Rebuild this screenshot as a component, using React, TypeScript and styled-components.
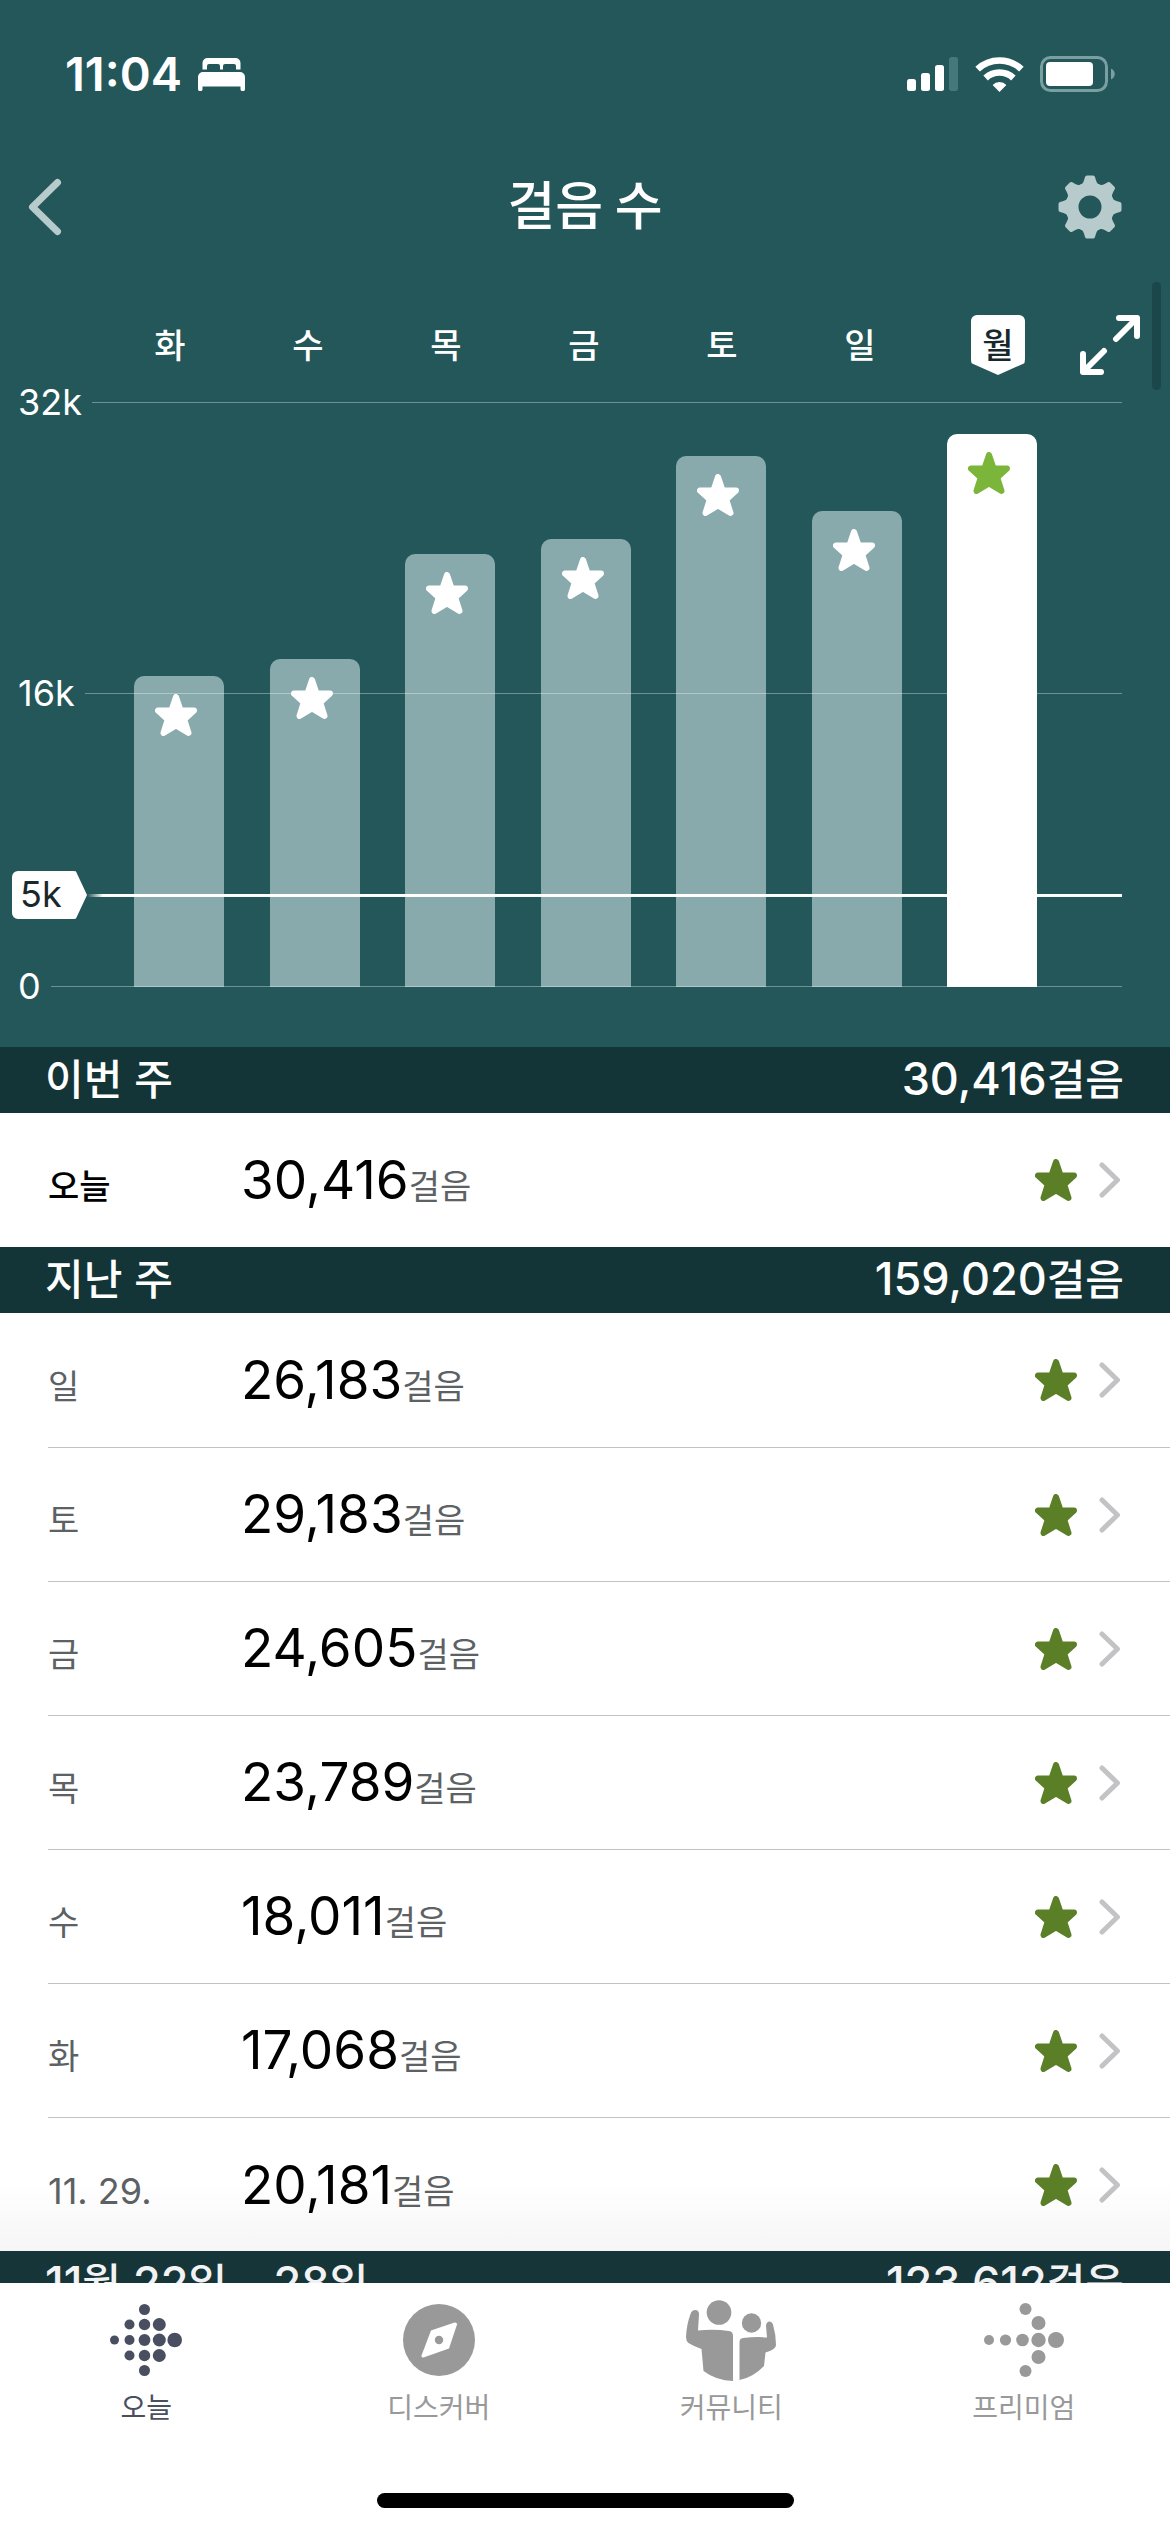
import React from "react";
import styled, { createGlobalStyle, css } from "styled-components";

const latin = `Inter, "Noto Sans CJK KR", sans-serif`;
const korean = `"Noto Sans CJK KR", sans-serif`;

const color = {
  teal: "#23575a",
  band: "#133537",
  mist: "#b7cbcc",
  bar: "#89aaad",
  grid: "rgba(255, 255, 255, 0.35)",
  ink: "#17292c",
  goal: "#7bb53a",
  goalDark: "#5b7f27",
  muted: "#5c6163",
  line: "#c3c3c6",
  navOn: "#494f60",
  navOff: "#999999",
};

const GlobalStyle = createGlobalStyle`
  *, *::before, *::after { box-sizing: border-box; }
  body { margin: 0; background: #fff; font-family: ${latin}; }
  h1, h2, p, ul { margin: 0; padding: 0; }
  ul { list-style: none; }
  button { border: 0; padding: 0; background: none; color: inherit; font: inherit; cursor: pointer; }
  a { color: inherit; text-decoration: none; }
  svg { display: block; flex: none; }
`;

const Screen = styled.div`
  position: relative;
  display: flex;
  flex-direction: column;
  height: 100vh;
  overflow: hidden;
  background: #fff;
`;

const Hero = styled.header`
  background: ${color.teal};
  color: #fff;
`;

const StatusBar = styled.div`
  display: flex;
  justify-content: space-between;
  align-items: center;
  padding: 48px 54px 0 65px;
`;

const StatusGroup = styled.div`
  display: flex;
  align-items: center;
  gap: 16px;
`;

const Clock = styled.span`
  font-size: 47px;
  font-weight: 600;
  line-height: 52px;
`;

const TitleBar = styled.div`
  display: grid;
  grid-template-columns: 1fr auto 1fr;
  align-items: center;
  height: 80px;
  margin-top: 67px;
  padding: 0 48px 0 28px;
`;

const Title = styled.h1`
  font-family: ${korean};
  font-size: 52px;
  font-weight: 500;
  line-height: 72px;
  padding: 0 0 8px 20px;
`;

const IconButton = styled.button<{ $end?: boolean }>`
  justify-self: ${(p) => (p.$end ? "end" : "start")};
  display: flex;
`;

const DayBar = styled.div`
  display: flex;
  align-items: center;
  justify-content: space-between;
  height: 60px;
  margin-top: 68px;
  padding: 0 30px 0 101px;
`;

const DayList = styled.ul`
  flex: 1;
  max-width: 966px;
  display: grid;
  grid-template-columns: repeat(7, 1fr);
`;

const Day = styled.li`
  display: flex;
  justify-content: center;
  font-family: ${korean};
  font-size: 34px;
  font-weight: 500;
  line-height: 58px;
`;

const DayFlag = styled.span`
  width: 54px;
  height: 60px;
  text-align: center;
  line-height: 58px;
  color: ${color.ink};
  background: #fff;
  border-radius: 6px 6px 16px 16px;
  clip-path: polygon(0 0, 100% 0, 100% 80%, 50% 100%, 0 80%);
`;

const Chart = styled.section`
  position: relative;
  height: 672px;
  padding: 27px 48px 60px 134px;
`;

const Bars = styled.ul`
  height: 585px;
  display: grid;
  grid-template-columns: repeat(7, 90px);
  justify-content: space-between;
  align-items: end;
  max-width: 903px;
`;

const Bar = styled.li<{ $active?: boolean }>`
  display: flex;
  justify-content: center;
  padding: 18px 6px 0 0;
  border-radius: 10px 10px 0 0;
  color: ${(p) => (p.$active ? color.goal : "#fff")};
  background: ${(p) => (p.$active ? "#fff" : color.bar)};
`;

/* Scale lines are drawn over the bars, each measured up from the chart floor. */
const Scale = styled.div`
  position: absolute;
  left: 18px;
  right: 48px;
  display: flex;
  align-items: center;
  height: 44px;
  transform: translateY(50%);
  font-size: 36px;
  line-height: 44px;
`;

const ScaleLine = styled.span`
  flex: 1;
  height: 1px;
  margin-left: 10px;
  background: ${color.grid};
`;

const GoalScale = styled(Scale)`
  left: 12px;
  height: 48px;
`;

const GoalFlag = styled.span`
  width: 75px;
  height: 48px;
  padding-left: 8px;
  line-height: 47px;
  color: ${color.ink};
  background: #fff;
  border-radius: 6px 14px 14px 6px;
  clip-path: polygon(0 0, 85% 0, 100% 50%, 85% 100%, 0 100%);
`;

const GoalLine = styled.span`
  flex: 1;
  height: 3px;
  background: linear-gradient(90deg, rgba(255, 255, 255, 0) 0, #fff 16px);
`;

const ScrollThumb = styled.span`
  position: absolute;
  top: 282px;
  right: 9px;
  width: 9px;
  height: 108px;
  border-radius: 5px;
  background: #1b474a;
`;

const History = styled.main`
  position: relative;
  flex: 1;
  min-height: 0;
  overflow: hidden;
  &::after {
    content: "";
    position: absolute;
    inset: auto 0 0;
    height: 100px;
    background: linear-gradient(rgba(60, 60, 80, 0), rgba(60, 60, 80, 0.07));
    pointer-events: none;
  }
`;

const Band = styled.div`
  display: flex;
  justify-content: space-between;
  align-items: baseline;
  height: 66px;
  padding: 0 46px 0 45px;
  background: ${color.band};
  color: #fff;
`;

const bandText = css`
  font-family: ${korean};
  font-size: 42px;
  font-weight: 500;
  line-height: 60px;
`;

const BandTitle = styled.h2`
  ${bandText}
  white-space: pre;
`;

const BandTotal = styled.p`
  ${bandText}
`;

const BandNumber = styled.span`
  font-family: ${latin};
  font-size: 45px;
`;

const RowItem = styled.li`
  margin-left: 48px;
  & + & {
    border-top: 1px solid ${color.line};
  }
  & + & > a {
    height: 133px;
  }
`;

const RowLink = styled.a`
  display: flex;
  align-items: center;
  height: 134px;
  padding-right: 49px;
`;

const RowText = styled.span`
  flex: 1;
  display: flex;
  align-items: baseline;
  padding-top: 6px;
  line-height: 66px;
`;

const RowLabel = styled.span<{ $today?: boolean; $date?: boolean }>`
  width: 193px;
  font-size: ${(p) => (p.$date ? 36 : 34)}px;
  font-weight: ${(p) => (p.$today ? 500 : 400)};
  color: ${(p) => (p.$today ? "#000" : color.muted)};
`;

const Steps = styled.span`
  font-size: 53px;
  color: #000;
`;

const Unit = styled.span`
  font-family: ${korean};
  font-size: 34px;
  color: ${color.muted};
`;

const RowIcons = styled.span`
  display: flex;
  align-items: center;
  gap: 22px;
  color: ${color.goalDark};
`;

const TabBar = styled.nav`
  display: flex;
  flex-direction: column;
  align-items: center;
  justify-content: space-between;
  height: 249px;
  padding-bottom: 24px;
  background: #fff;
`;

const Tabs = styled.ul`
  width: 100%;
  display: grid;
  grid-template-columns: repeat(4, 1fr);
`;

const Tab = styled.a<{ $on?: boolean }>`
  display: flex;
  flex-direction: column;
  align-items: center;
  color: ${(p) => (p.$on ? color.navOn : color.navOff)};
`;

const TabIcon = styled.span`
  display: flex;
  align-items: center;
  height: 84px;
  margin-top: 15px;
`;

const TabLabel = styled.span`
  font-family: ${korean};
  font-size: 28px;
  line-height: 48px;
`;

const HomeIndicator = styled.span`
  width: 417px;
  height: 15px;
  border-radius: 8px;
  background: #000;
`;

const Star = () => (
  <svg width="42" height="42" viewBox="0 0 42 42" fill="currentColor" stroke="currentColor" strokeWidth="6" strokeLinejoin="round">
    <path d="M21 3 L25.500 16.300 L39 16.500 L29.200 25.500 L33.500 39 L21 31.500 L8.500 39 L12.800 25.500 L3 16.500 L16.500 16.300 Z" />
  </svg>
);

const Bed = () => (
  <svg width="47" height="33" viewBox="0 0 47 33" fill="currentColor">
    <path d="M4.500 11.500V5a5 5 0 0 1 5-5h28a5 5 0 0 1 5 5v6.500h-4.500V8a2 2 0 0 0-2-2h-9a2 2 0 0 0-2 2v3.500h-3V8a2 2 0 0 0-2-2h-9a2 2 0 0 0-2 2v3.500z" />
    <path d="M0 19a5 5 0 0 1 5-5h37a5 5 0 0 1 5 5v12a2 2 0 0 1-4.500 0v-2.500h-38V31a2 2 0 0 1-4.500 0z" />
  </svg>
);

const Signal = () => (
  <svg width="52" height="36" viewBox="0 0 52 36" fill="currentColor">
    <rect x="0" y="23" width="9" height="12" rx="2.500" />
    <rect x="14" y="17" width="9" height="18" rx="2.500" />
    <rect x="28" y="9" width="9" height="26" rx="2.500" />
    <rect x="42" y="1" width="9" height="34" rx="2.500" fill="#46777a" />
  </svg>
);

const Wifi = () => (
  <svg width="49" height="36" viewBox="0 0 49 36">
    <g fill="none" stroke="currentColor" strokeWidth="6.600">
      <path d="M2.600 13.200a32 32 0 0 1 43.800 0" />
      <path d="M10.600 22a20.500 20.500 0 0 1 27.800 0" />
    </g>
    <path fill="currentColor" d="M24.500 36 17.600 29a9.600 9.600 0 0 1 13.800 0z" />
  </svg>
);

const Battery = () => (
  <svg width="76" height="36" viewBox="0 0 76 36">
    <rect x="1.500" y="1.500" width="65" height="33" rx="9" fill="none" stroke="#7a9fa1" strokeWidth="3" />
    <rect x="6" y="6" width="47" height="24" rx="4" fill="currentColor" />
    <path d="M71 12.500c5 2 5 9 0 11z" fill="#7a9fa1" />
  </svg>
);

const Back = () => (
  <svg width="34" height="58" viewBox="0 0 34 58" fill="none" stroke={color.mist} strokeWidth="7" strokeLinecap="round" strokeLinejoin="round">
    <path d="M29.500 4.500 4.500 29l25 24.500" />
  </svg>
);

const gearTeeth = [0, 45, 90, 135, 180, 225, 270, 315];

const Gear = () => (
  <svg width="64" height="64" viewBox="-32 -32 64 64">
    <circle r="18" fill="none" stroke={color.mist} strokeWidth="13" />
    {gearTeeth.map((angle) => (
      <path key={angle} transform={`rotate(${angle})`} d="M-10-21C-7-23-6-26-5-30Q-4.500-31.500-3-31.500h6Q4.500-31.500 5-30C6-26 7-23 10-21z" fill={color.mist} />
    ))}
  </svg>
);

const Expand = () => (
  <svg width="60" height="60" viewBox="0 0 60 60" fill="none" stroke="currentColor" strokeWidth="6" strokeLinecap="round" strokeLinejoin="round">
    <path d="M39 3h18v18M57 3 36 24M3 39v18h18M3 57l21-21" />
  </svg>
);

const Chevron = () => (
  <svg width="22" height="36" viewBox="0 0 22 36" fill="none" stroke={color.line} strokeWidth="5" strokeLinecap="round" strokeLinejoin="round">
    <path d="M3 3l15.500 15L3 33" />
  </svg>
);

const Dots = ({ size, dots }: { size: [number, number]; dots: number[][] }) => (
  <svg width={size[0]} height={size[1]} viewBox={`0 0 ${size[0]} ${size[1]}`} fill="currentColor">
    {dots.map(([cx, cy, r]) => (
      <circle key={`${cx}-${cy}`} cx={cx} cy={cy} r={r} />
    ))}
  </svg>
);

const todayDots = [
  [4.5, 36, 4.5],
  [19.5, 20.5, 5], [19.5, 36, 5], [19.5, 51.5, 5],
  [34.5, 5.5, 5.5], [34.5, 20.5, 5.7], [34.5, 36, 5.9], [34.5, 51.5, 5.7], [34.5, 66.5, 5.5],
  [49.3, 20.5, 6.5], [49.3, 36, 6.5], [49.3, 51.5, 6.5],
  [64.7, 36, 7.3],
];

const premiumDots = [
  [5, 37, 5], [21.5, 37, 5.6], [38.5, 37, 6.3], [54.5, 37, 7.2], [72, 37, 8],
  [41.5, 6, 6], [54.5, 20, 7], [54.5, 54, 7], [41.5, 68, 6],
];

const Compass = () => (
  <svg width="72" height="72" viewBox="0 0 72 72">
    <circle cx="36" cy="36" r="36" fill="currentColor" />
    <path d="M28 26.500 51.500 18.500Q54 18 54 20.500L46 44.500 20.500 53.500Q18 54 18.500 51.500z" fill="#fff" />
    <circle cx="36" cy="36" r="4.200" fill="currentColor" />
  </svg>
);

const Community = () => (
  <svg width="90" height="81" viewBox="0 0 90 81" fill="currentColor">
    <circle cx="33" cy="12.500" r="12.300" />
    <circle cx="65.500" cy="23" r="9.700" />
    <path d="M4.500 14C6 8.500 13.500 9 13 14.500L12 30.500Q28 29 43 31Q47 31.500 47 36V81Q30 80.500 17.500 71L15.500 49Q8 46.500 2.500 43Q0 41 0 37Q.500 25 4.500 14z" />
    <path d="M53.500 80V42Q53.500 38.500 57 38Q70 36.500 81 37.500L80 26C80 20.500 85.500 20 87 24.500Q90 35 90 45Q90 47.500 87.500 49Q83 52 79.500 52.500L78 66Q67 77.500 53.500 80z" />
  </svg>
);

type DayStat = { label: string; steps: number };

const CHART_MAX = 32150;

const week: DayStat[] = [
  { label: "화", steps: 17068 },
  { label: "수", steps: 18011 },
  { label: "목", steps: 23789 },
  { label: "금", steps: 24605 },
  { label: "토", steps: 29183 },
  { label: "일", steps: 26183 },
  { label: "월", steps: 30416 },
];

const lastWeek: DayStat[] = [
  ...week.slice(0, 6).reverse(),
  { label: "11. 29.", steps: 20181 },
];

const format = (n: number) => n.toLocaleString("en-US");

const scales = [
  { label: "32k", bottom: 645 },
  { label: "16k", bottom: 354 },
  { label: "0", bottom: 61 },
];

const tabs = [
  { label: "오늘", icon: <Dots size={[72, 72]} dots={todayDots} /> },
  { label: "디스커버", icon: <Compass /> },
  { label: "커뮤니티", icon: <Community /> },
  { label: "프리미엄", icon: <Dots size={[80, 74]} dots={premiumDots} /> },
];

/* Figures, dashes and spaces use the Latin face; Hangul keeps the Korean one. */
const WeekBand = ({ title, total }: { title: string; total: number }) => (
  <Band>
    <BandTitle>
      {title.split(/([\d– ]+)/).map((part, i) => (i % 2 ? <BandNumber key={i}>{part}</BandNumber> : part))}
    </BandTitle>
    <BandTotal>
      <BandNumber>{format(total)}</BandNumber>걸음
    </BandTotal>
  </Band>
);

const Row = ({ label, steps, today }: DayStat & { today?: boolean }) => (
  <RowItem>
    <RowLink href="#day">
      <RowText>
        <RowLabel $today={today} $date={/\d/.test(label)}>
          {label}
        </RowLabel>
        <Steps>{format(steps)}</Steps>
        <Unit>걸음</Unit>
      </RowText>
      <RowIcons>
        <Star />
        <Chevron />
      </RowIcons>
    </RowLink>
  </RowItem>
);

export default function App() {
  return (
    <>
      <GlobalStyle />
      <Screen>
        <Hero>
          <StatusBar>
            <StatusGroup>
              <Clock>11:04</Clock>
              <Bed />
            </StatusGroup>
            <StatusGroup>
              <Signal />
              <Wifi />
              <Battery />
            </StatusGroup>
          </StatusBar>
          <TitleBar>
            <IconButton aria-label="뒤로">
              <Back />
            </IconButton>
            <Title>걸음 수</Title>
            <IconButton $end aria-label="설정">
              <Gear />
            </IconButton>
          </TitleBar>
          <DayBar>
            <DayList>
              {week.map((d, i) => (
                <Day key={d.label}>{i === week.length - 1 ? <DayFlag>{d.label}</DayFlag> : d.label}</Day>
              ))}
            </DayList>
            <IconButton $end aria-label="전체 화면">
              <Expand />
            </IconButton>
          </DayBar>
          <Chart aria-label="걸음 수">
            <Bars>
              {week.map((d, i) => (
                <Bar key={d.label} $active={i === week.length - 1} style={{ height: `${(d.steps / CHART_MAX) * 100}%` }}>
                  <Star />
                </Bar>
              ))}
            </Bars>
            {scales.map((s) => (
              <Scale key={s.label} style={{ bottom: s.bottom }}>
                {s.label}
                <ScaleLine />
              </Scale>
            ))}
            <GoalScale style={{ bottom: 152 }}>
              <GoalFlag>5k</GoalFlag>
              <GoalLine />
            </GoalScale>
          </Chart>
        </Hero>
        <History>
          <WeekBand title="이번 주" total={30416} />
          <ul>
            <Row label="오늘" steps={30416} today />
          </ul>
          <WeekBand title="지난 주" total={159020} />
          <ul>
            {lastWeek.map((d) => (
              <Row key={d.label} {...d} />
            ))}
          </ul>
          <WeekBand title="11월 22일 – 28일" total={123612} />
        </History>
        <TabBar>
          <Tabs>
            {tabs.map((t, i) => (
              <li key={t.label}>
                <Tab href="#tab" $on={i === 0}>
                  <TabIcon>{t.icon}</TabIcon>
                  <TabLabel>{t.label}</TabLabel>
                </Tab>
              </li>
            ))}
          </Tabs>
          <HomeIndicator />
        </TabBar>
        <ScrollThumb />
      </Screen>
    </>
  );
}
